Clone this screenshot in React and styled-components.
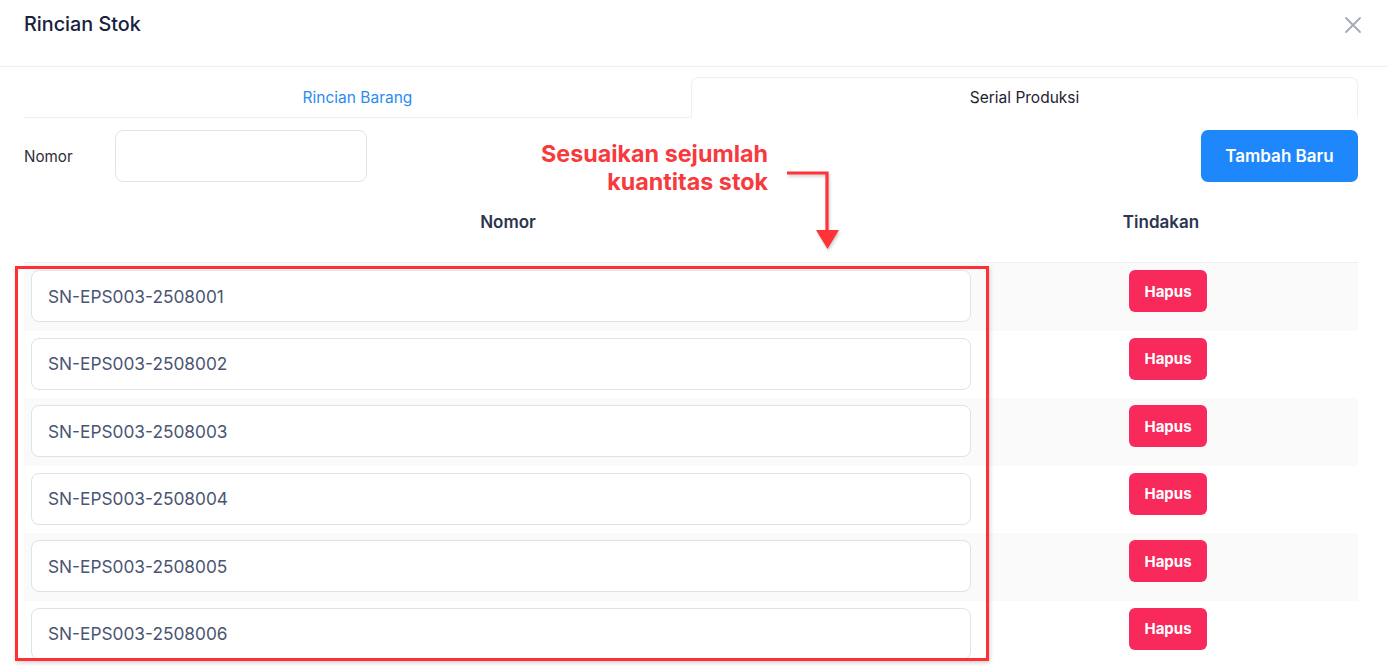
import React from "react";
import styled, { createGlobalStyle } from "styled-components";

const Global = createGlobalStyle`
  html, body { margin: 0; padding: 0; background: #fff; }
  body { font-family: Inter, "Noto Sans", sans-serif; }
  * { box-sizing: border-box; }
`;

const Modal = styled.div`
  position: relative;
  width: 1387px;
  height: 666px;
  overflow: hidden;
  background: #fff;
`;

const Header = styled.div`
  height: 67px;
  display: flex;
  align-items: flex-start;
  justify-content: space-between;
  padding: 12px 25px 0 24px;
  border-bottom: 1px solid #efefef;
`;

const Title = styled.h2`
  margin: 0;
  font-size: 19.8px;
  font-weight: 500;
  color: #18213d;
  line-height: 24px;
`;

const Close = styled.button`
  border: 0;
  background: none;
  padding: 0;
  margin: 4px 0 0 0;
  width: 18px;
  height: 18px;
  cursor: pointer;
  color: #a3a8b5;
`;

const Body = styled.div`
  padding: 10px 29px 0 24px;
`;

const Tabs = styled.div`
  display: grid;
  grid-template-columns: 1fr 1fr;
  height: 41px;
`;

const Tab = styled.div`
  display: flex;
  align-items: center;
  justify-content: center;
  font-size: 15.5px;
  color: ${(p) => (p.$active ? "#1f2330" : "#2a8cf2")};
  border: 1px solid ${(p) => (p.$active ? "#efefef" : "transparent")};
  border-bottom: ${(p) => (p.$active ? "1px solid transparent" : "1px solid #efefef")};
  border-radius: ${(p) => (p.$active ? "7px 7px 0 0" : "0")};
`;

const FormRow = styled.div`
  display: flex;
  align-items: center;
  margin-top: 12px;
  height: 52px;
`;

const Label = styled.label`
  width: 91px;
  font-size: 15.2px;
  color: #2b2f3a;
`;

const TextInput = styled.input`
  width: ${(p) => p.$w || "100%"};
  height: ${(p) => p.$h || "52px"};
  border: 1px solid #dfe1ec;
  border-radius: 8px;
  background: #fff;
  padding: 0 16px;
  font-family: Inter, sans-serif;
  font-size: 17.3px;
  color: #4a5573;
  outline: none;
`;

const PrimaryButton = styled.button`
  margin-left: auto;
  width: 157px;
  height: 52px;
  border: 0;
  border-radius: 7px;
  background: #1e87fb;
  color: #fff;
  font-family: Inter, sans-serif;
  font-size: 17px;
  font-weight: 600;
`;

const Table = styled.div`
  display: grid;
  grid-template-columns: 954px 1fr;
`;

const HeadCell = styled.div`
  height: 81px;
  display: flex;
  align-items: center;
  justify-content: center;
  font-size: 17px;
  font-weight: 600;
  color: #2c3550;
  border-bottom: 1px solid #efefef;
  padding: 0 ${(p) => p.$pr || "0"} 0 ${(p) => p.$pl || "0"};
`;

const Cell = styled.div`
  height: 67.5px;
  padding: 7px 7px 0 7px;
  background: ${(p) => (p.$striped ? "#fafafa" : "#fff")};
  display: flex;
  justify-content: center;
  align-items: flex-start;
`;

const DangerButton = styled.button`
  width: 78px;
  height: 42px;
  border: 0;
  border-radius: 6px;
  background: #f8295b;
  color: #fff;
  font-family: Inter, sans-serif;
  font-size: 15px;
  font-weight: 700;
`;

const Highlight = styled.div`
  position: absolute;
  left: 15px;
  top: 266px;
  width: 974px;
  height: 395px;
  border: 3px solid #ff2f35;
  box-shadow: 1px 2px 4px rgba(0, 0, 0, 0.18);
  pointer-events: none;
`;

const Note = styled.div`
  position: absolute;
  right: 619px;
  top: 140px;
  text-align: right;
  font-size: 23.3px;
  font-weight: 700;
  line-height: 28px;
  color: #f63a3e;
`;

const Arrow = styled.svg`
  position: absolute;
  left: 784px;
  top: 168px;
  overflow: visible;
  filter: drop-shadow(1px 2px 1.5px rgba(0, 0, 0, 0.2));
`;

const rows = [
  "SN-EPS003-2508001",
  "SN-EPS003-2508002",
  "SN-EPS003-2508003",
  "SN-EPS003-2508004",
  "SN-EPS003-2508005",
  "SN-EPS003-2508006",
];

export default function App() {
  return (
    <Modal>
      <Global />
      <Header>
        <Title>Rincian Stok</Title>
        <Close aria-label="close">
          <svg width="18" height="18" viewBox="0 0 18 18">
            <path d="M2 2 L16 16 M16 2 L2 16" stroke="currentColor" strokeWidth="1.8" strokeLinecap="round" />
          </svg>
        </Close>
      </Header>
      <Body>
        <Tabs>
          <Tab>Rincian Barang</Tab>
          <Tab $active>Serial Produksi</Tab>
        </Tabs>
        <FormRow>
          <Label>Nomor</Label>
          <TextInput $w="252px" />
          <PrimaryButton>Tambah Baru</PrimaryButton>
        </FormRow>
        <Table>
          <HeadCell $pl="14px">Nomor</HeadCell>
          <HeadCell $pr="14px">Tindakan</HeadCell>
          {rows.map((r, i) => (
            <React.Fragment key={r}>
              <Cell $striped={i % 2 === 0}>
                <TextInput defaultValue={r} />
              </Cell>
              <Cell $striped={i % 2 === 0}>
                <DangerButton>Hapus</DangerButton>
              </Cell>
            </React.Fragment>
          ))}
        </Table>
      </Body>
      <Highlight />
      <Note>
        Sesuaikan sejumlah
        <br />
        kuantitas stok
      </Note>
      <Arrow width="60" height="85" viewBox="0 0 60 85">
        <path d="M3 5 H43 V62" fill="none" stroke="#ff3338" strokeWidth="3.2" />
        <path d="M32 62 H55 L43.5 81 Z" fill="#ff3338" />
      </Arrow>
    </Modal>
  );
}
